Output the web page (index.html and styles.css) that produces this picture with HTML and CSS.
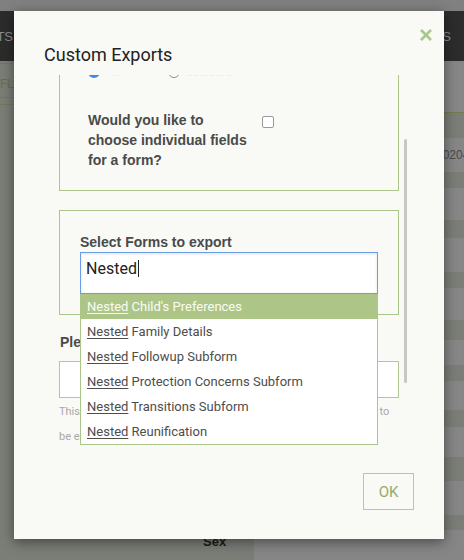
FILE: index.html
```html
<!DOCTYPE html>
<html lang="en">
<head>
<meta charset="utf-8">
<title>Custom Exports</title>
<link rel="stylesheet" href="styles.css">
</head>
<body>
<div class="page">
  <div class="topstrip"></div>
  <header class="nav">
    <div class="nav-left"><span>REPORTS</span></div>
    <div class="nav-right">USERS</div>
  </header>
  <div class="main">
    <aside class="side">
      <div class="side-tabs">FLAGS</div>
      <div class="side-rule"></div>
      <div class="side-label">Sex</div>
    </aside>
    <section class="table">
      <div class="band light h51"></div>
      <div class="band rule"></div>
      <div class="band dark h25"></div>
      <div class="band light h34 cell">20200204561</div>
      <div class="band dark h16"></div>
      <div class="band light h32"></div>
      <div class="band dark h18"></div>
      <div class="band light h34"></div>
      <div class="band dark h16"></div>
      <div class="band light h32"></div>
      <div class="band dark h20"></div>
      <div class="band light h25"></div>
      <div class="band dark h16"></div>
      <div class="band light h29"></div>
      <div class="band dark h17"></div>
      <div class="band light h30"></div>
      <div class="band dark h24"></div>
      <div class="band light h34"></div>
      <div class="band dark h15"></div>
      <div class="band light h30"></div>
    </section>
  </div>
</div>

<div class="modal">
  <button class="close" aria-label="Close">
    <svg width="12" height="12" viewBox="0 0 12 12"><path d="M1 1 L11 11 M11 1 L1 11" stroke="#a9c68b" stroke-width="2.6" fill="none"/></svg>
  </button>
  <h2 class="modal-title">Custom Exports</h2>
  <div class="modal-body">
    <div class="scroll">
      <div class="scroll-inner">
        <div class="box box-format">
          <div class="radios">
            <label class="radio-opt"><span class="radio on"></span><span class="radio-text">All</span></label>
            <label class="radio-opt"><span class="radio"></span><span class="radio-text">Selected</span></label>
          </div>
          <div class="question">
            <span class="q-text">Would you like to choose individual fields for a form?</span>
            <span class="checkbox"></span>
          </div>
        </div>

        <div class="box box-forms">
          <div class="field-label">Select Forms to export</div>
          <div class="combo">
            <div class="combo-input">Nested<span class="caret"></span></div>
            <ul class="dropdown">
              <li class="active"><u>Nested</u> Child's Preferences</li>
              <li><u>Nested</u> Family Details</li>
              <li><u>Nested</u> Followup Subform</li>
              <li><u>Nested</u> Protection Concerns Subform</li>
              <li><u>Nested</u> Transitions Subform</li>
              <li><u>Nested</u> Reunification</li>
            </ul>
          </div>
        </div>

        <div class="name-label">Please enter a file name</div>
        <div class="name-input"></div>
        <p class="help">This will be the name of the file that is generated with the records to be exported.</p>
      </div>
    </div>
    <div class="thumb"></div>
  </div>
  <div class="modal-footer">
    <button class="ok">OK</button>
  </div>
</div>
</body>
</html>
```

FILE: styles.css
```css
* { box-sizing: border-box; }
html, body { margin: 0; height: 100%; }
body {
  background: #7c7e78;
  font-family: Roboto, "Liberation Sans", sans-serif;
  overflow: hidden;
}

/* ---------- background page ---------- */
.page { height: 560px; display: flex; flex-direction: column; }
.topstrip { height: 11px; background: #808080; flex: none; }
.nav {
  height: 50px; flex: none;
  background: #2c2c2c;
  display: flex; justify-content: space-between; align-items: center;
  color: #8c8c8c;
  font: 13px "Liberation Sans", Arial, sans-serif;
}
.nav-left {
  width: 14px; overflow: hidden;
  display: flex; justify-content: flex-end;
  white-space: nowrap;
}
.nav-left span { flex: none; padding-right: 1px; }
.nav-right { margin-right: 13px; }

.main { flex: 1; display: grid; grid-template-columns: 254px 1fr; }
.side { background: #7b7d77; display: flex; flex-direction: column; }
.side-tabs {
  margin-top: 2px; height: 35px;
  border-top: 1px solid #6f7d51; border-bottom: 1px solid #6f7d51;
  font: 12px/40px "Liberation Sans", Arial, sans-serif;
  color: #62714a;
}
.side-rule { margin-top: 6px; border-top: 1px solid #6f7d51; }
.side-label {
  margin-top: auto; padding: 0 0 10px 203px;
  font: 700 13px/16px "Liberation Sans", Arial, sans-serif;
  color: #1b1b1b;
}

.table { display: flex; flex-direction: column; }
.band { flex: none; }
.band.light { background: #868686; }
.band.dark { background: #7b7d77; }
.band.rule { height: 1px; background: #6f7d51; }
.cell {
  padding-left: 162px;
  font: 12px/34px "Liberation Sans", Arial, sans-serif;
  color: #4a4a4a;
  white-space: nowrap; overflow: hidden;
}
.h15 { height: 15px; } .h16 { height: 16px; } .h17 { height: 17px; }
.h18 { height: 18px; } .h20 { height: 20px; } .h24 { height: 24px; }
.h25 { height: 25px; } .h29 { height: 29px; } .h30 { height: 30px; }
.h32 { height: 32px; } .h34 { height: 34px; } .h51 { height: 51px; }

/* ---------- modal ---------- */
.modal {
  position: absolute; left: 14px; top: 11px;
  width: 430px; height: 528px;
  background: #f9f9f5;
  box-shadow: 0 3px 12px rgba(0, 0, 0, .45);
  padding: 32px 30px 29px;
  display: flex; flex-direction: column;
}
.close {
  position: absolute; left: 406px; top: 18px;
  width: 12px; height: 12px; padding: 0; border: 0; background: none;
}
.close svg { display: block; }
.modal-title {
  margin: 0; flex: none;
  font: 400 18px/24px Roboto, sans-serif;
  color: #222;
}
.modal-body {
  position: relative; flex: none;
  margin: 8px 0 0 15px; height: 380px; width: 340px;
}
.scroll { height: 100%; overflow: hidden; }
.scroll-inner { margin-top: -34px; }
.thumb {
  position: absolute; left: 345px; top: 64px;
  width: 3px; height: 244px;
  background: #c8c8c2; border-radius: 2px;
}

.box { border: 1px solid #abc689; }
.box-format { padding: 20px 28px; }
.radios { display: flex; height: 20px; align-items: center; }
.radio-opt { width: 80px; display: flex; align-items: center; gap: 6px; }
.radio {
  width: 12px; height: 12px; border-radius: 50%;
  border: 1px solid #8a8a8a; background: #fff; flex: none;
}
.radio.on { border: 3.5px solid #3b8be8; }
.radio-text { font: 12px/14px Roboto, sans-serif; color: #ecece8; }

.question { display: flex; margin-top: 28px; align-items: flex-start; }
.q-text {
  width: 160px;
  font: 700 14px/20px "Liberation Sans", Arial, sans-serif;
  color: #4a4a4a;
}
.checkbox {
  width: 12px; height: 12px; margin: 6px 0 0 14px;
  border: 1px solid #9a9a9a; border-radius: 2px; background: #fff;
}

.box-forms { margin-top: 19px; padding: 21px 20px 20px; }
.field-label {
  font: 700 14px/20px "Liberation Sans", Arial, sans-serif;
  color: #4a4a4a;
}
.combo { position: relative; }
.combo-input {
  height: 42px; padding: 6px 5px;
  border: 1px solid #6b9de6; background: #fff;
  box-shadow: inset 0 1px 3px rgba(0, 0, 0, .12);
  font: 16px/20px Roboto, sans-serif; color: #222;
}
.caret {
  display: inline-block; width: 1px; height: 17px;
  background: #222; vertical-align: -3px; margin-left: 1px;
}
.dropdown {
  position: absolute; top: 100%; left: 0; width: 100%;
  margin: 0; padding: 0; list-style: none;
  background: #fff;
  border: 1px solid #abc689; border-top: 0;
  z-index: 2;
}
.dropdown li {
  height: 25px; padding-left: 6px;
  font: 13px/25px Roboto, sans-serif; color: #4d4d4d;
  white-space: nowrap;
}
.dropdown li.active {
  background: #adc687; color: #fbfbf6;
  margin: 0 -1px; padding-left: 7px;
}
.dropdown u { text-underline-offset: 2px; }

.name-label {
  margin-top: 17px; padding-left: 1px;
  font: 700 14px/20px "Liberation Sans", Arial, sans-serif;
  color: #4a4a4a;
}
.name-input {
  margin-top: 9px; height: 37px;
  border: 1px solid #b1ca91; background: #fff;
}
.help {
  margin: 1px 0 0;
  font: 11px/25px Roboto, sans-serif;
  color: #a9a9a5;
}

.modal-footer {
  flex: none; margin-top: 18px;
  display: flex; justify-content: flex-end;
}
.ok {
  width: 51px; height: 37px; padding: 0;
  border: 1px solid #b4cb96; background: transparent;
  font: 15px Roboto, sans-serif; color: #8fad70;
}
```
